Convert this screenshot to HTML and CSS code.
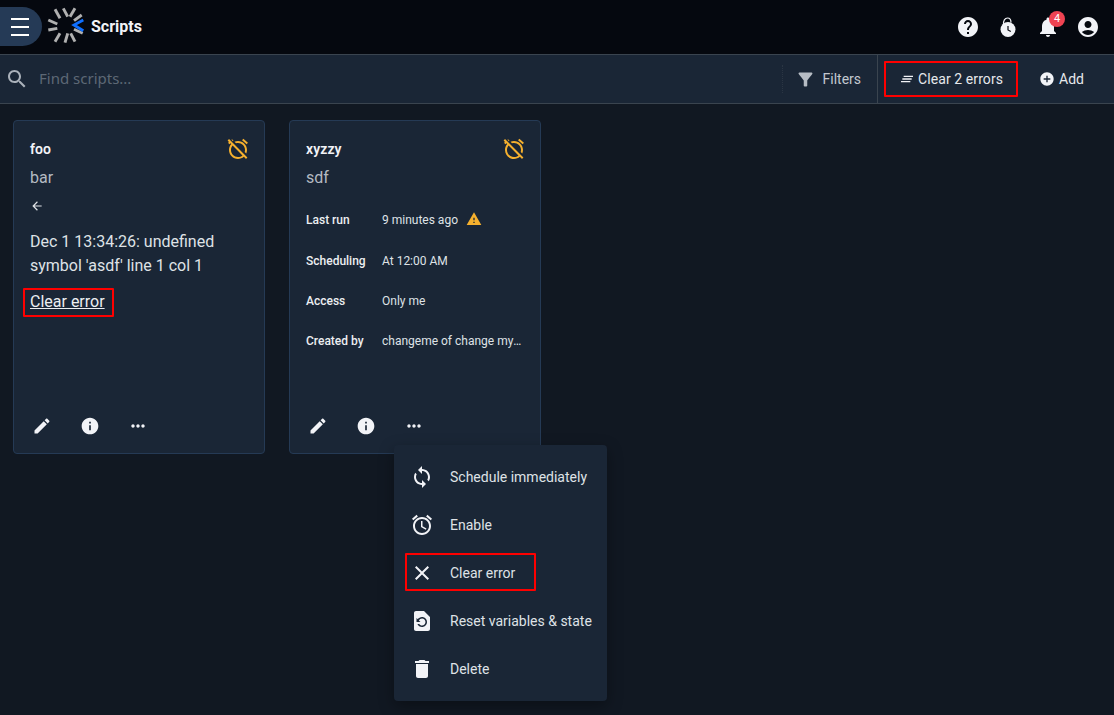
FILE: index.html
```html
<!DOCTYPE html>
<html lang="en">
<head>
<meta charset="utf-8">
<title>Scripts</title>
<link rel="stylesheet" href="styles.css">
</head>
<body>
<header class="topbar">
  <button class="nav-toggle" aria-label="Menu"><span></span><span></span><span></span></button>
  <svg class="logo" viewBox="0 0 44 42" width="44" height="42">
    <g stroke="#b0b0b0" stroke-width="2.900" fill="none">
      <path d="M11 5.300 16 14.300"/><path d="M19.300 4.300 23.700 12.700"/><path d="M31 4.300 26 12.700"/><path d="M37.700 11 30 16.700"/>
      <path d="M4.300 16 13.300 20"/><path d="M4.300 26 13.300 24.300"/><path d="M11 37.700 16 29.300"/>
      <path d="M21 38.700 23.700 29.300"/><path d="M31 37.700 26.700 29.300"/><path d="M38.700 29.300 30 25.300"/>
    </g>
    <path d="M39.300 16 30 21 39.300 26.700" stroke="#0f6fff" stroke-width="2.800" fill="none"/>
  </svg>
  <h1 class="page-title">Scripts</h1>
  <div class="top-actions">
    <svg class="icon" viewBox="0 0 24 24"><path d="M12 2C6.48 2 2 6.48 2 12s4.48 10 10 10 10-4.48 10-10S17.52 2 12 2zm1 17h-2v-2h2v2zm2.070-7.750l-.9.920C13.450 12.900 13 13.500 13 15h-2v-.5c0-1.100.450-2.100 1.170-2.830l1.240-1.260c.370-.360.590-.860.590-1.410 0-1.100-.9-2-2-2s-2 .9-2 2H8c0-2.210 1.790-4 4-4s4 1.790 4 4c0 .880-.360 1.680-.930 2.250z"/></svg>
    <svg class="icon" viewBox="0 0 24 24"><path d="M7.500 10C7 5.500 9 3 11.500 3S15 5 15 7.500" fill="none" stroke="#f2f3f7" stroke-width="1.200"/><circle cx="12" cy="14.500" r="7.500"/><path d="M12 11v4l2.800 1.500" fill="none" stroke="#05080f" stroke-width="1.200"/></svg>
    <div class="bell">
      <svg class="icon" viewBox="0 0 24 24"><path d="M12 22c1.100 0 2-.9 2-2h-4c0 1.100.890 2 2 2zm6-6v-5c0-3.070-1.640-5.640-4.500-6.320V4c0-.830-.670-1.500-1.500-1.500s-1.500.670-1.500 1.500v.680C7.630 5.360 6 7.920 6 11v5l-2 2v1h16v-1l-2-2z"/></svg>
      <span class="badge">4</span>
    </div>
    <svg class="icon" viewBox="0 0 24 24"><path d="M12 2C6.480 2 2 6.480 2 12s4.480 10 10 10 10-4.480 10-10S17.520 2 12 2zm0 4c1.930 0 3.500 1.570 3.500 3.500S13.930 13 12 13s-3.500-1.570-3.500-3.500S10.070 6 12 6zm0 14c-2.030 0-4.430-.820-6.140-2.880C7.550 15.800 9.680 15 12 15s4.450.800 6.140 2.120C16.430 19.180 14.030 20 12 20z"/></svg>
  </div>
</header>

<div class="toolbar">
  <svg class="icon search-icon" viewBox="0 0 24 24"><path d="M15.500 14h-.790l-.280-.270C15.410 12.590 16 11.110 16 9.500 16 5.910 13.090 3 9.500 3S3 5.910 3 9.500 5.910 16 9.500 16c1.610 0 3.090-.590 4.230-1.570l.270.280v.790l5 4.990L20.490 19l-4.990-5zm-6 0C7.010 14 5 11.990 5 9.500S7.010 5 9.500 5 14 7.010 14 9.500 11.990 14 9.500 14z"/></svg>
  <span class="search-text">Find scripts...</span>
  <div class="filters">
    <svg class="filter-icon" viewBox="0 0 24 24"><path d="M4.250 5.610C6.270 8.200 10 13 10 13v6c0 .550.450 1 1 1h2c.550 0 1-.450 1-1v-6s3.720-4.800 5.740-7.390c.510-.660.040-1.610-.790-1.610H5.040c-.830 0-1.300.950-.790 1.610z"/></svg>
    <span>Filters</span>
  </div>
  <div class="tool-actions">
    <div class="clear-all outlined">
      <svg class="icon-sm" viewBox="0 0 24 24"><path d="M5 13h14v-2H5v2zm-2 4h14v-2H3v2zM7 7v2h14V7H7z"/></svg>
      <span>Clear 2 errors</span>
    </div>
    <div class="add">
      <svg class="icon-add" viewBox="0 0 24 24"><path d="M12 2C6.480 2 2 6.480 2 12s4.480 10 10 10 10-4.480 10-10S17.520 2 12 2zm5 11h-4v4h-2v-4H7v-2h4V7h2v4h4v2z"/></svg>
      <span>Add</span>
    </div>
  </div>
</div>

<main class="cards">
  <article class="card">
    <div class="card-head">
      <div class="card-title">foo</div>
      <svg class="alarm-off" viewBox="0 0 24 24"><path d="M10.040 6.290C10.660 6.110 11.320 6 12 6c3.860 0 7 3.140 7 7 0 .680-.110 1.340-.290 1.960l1.560 1.560c.470-1.080.730-2.270.730-3.520 0-4.970-4.030-9-9-9-1.250 0-2.440.260-3.530.720l1.570 1.570zm7.297-4.480l4.607 3.845-1.280 1.535-4.610-3.843zM3.020 2.100L1.610 3.510l1.370 1.370-.920.770 1.280 1.540 1.060-.880.800.800C3.830 8.690 3 10.750 3 13c0 4.970 4.030 9 9 9 2.250 0 4.310-.830 5.890-2.200l2.100 2.100 1.410-1.410L3.020 2.100zM12 20c-3.860 0-7-3.140-7-7 0-1.700.610-3.260 1.620-4.470l9.850 9.850C15.260 19.390 13.700 20 12 20zM7.480 3.730L6.060 2.310l-.590.480 1.420 1.420z"/></svg>
    </div>
    <div class="card-sub">bar</div>
    <svg class="back" viewBox="0 0 24 24"><path d="M20 11H7.830l5.590-5.590L12 4l-8 8 8 8 1.410-1.410L7.830 13H20v-2z"/></svg>
    <p class="err-text">Dec 1 13:34:26: undefined symbol 'asdf' line 1 col 1</p>
    <a class="clear-link outlined">Clear error</a>
    <div class="card-actions">
      <svg class="icon" viewBox="0 0 24 24"><path d="M3 17.250V21h3.750L17.810 9.940l-3.750-3.750L3 17.250zM20.710 7.040c.390-.390.390-1.020 0-1.410l-2.340-2.340c-.390-.390-1.020-.390-1.410 0l-1.830 1.830 3.750 3.750 1.830-1.830z"/></svg>
      <svg class="icon" viewBox="0 0 24 24"><path d="M12 2C6.480 2 2 6.480 2 12s4.480 10 10 10 10-4.480 10-10S17.520 2 12 2zm1 15h-2v-6h2v6zm0-8h-2V7h2v2z"/></svg>
      <svg class="icon" viewBox="0 0 24 24"><path d="M6 10c-1.100 0-2 .9-2 2s.9 2 2 2 2-.9 2-2-.9-2-2-2zm12 0c-1.100 0-2 .9-2 2s.9 2 2 2 2-.9 2-2-.9-2-2-2zm-6 0c-1.100 0-2 .9-2 2s.9 2 2 2 2-.9 2-2-.9-2-2-2z"/></svg>
    </div>
  </article>

  <article class="card">
    <div class="card-head">
      <div class="card-title">xyzzy</div>
      <svg class="alarm-off" viewBox="0 0 24 24"><path d="M10.040 6.290C10.660 6.110 11.320 6 12 6c3.860 0 7 3.140 7 7 0 .680-.110 1.340-.290 1.960l1.560 1.560c.470-1.080.730-2.270.730-3.520 0-4.970-4.030-9-9-9-1.250 0-2.440.260-3.530.720l1.570 1.570zm7.297-4.480l4.607 3.845-1.280 1.535-4.610-3.843zM3.020 2.100L1.610 3.510l1.370 1.370-.920.770 1.280 1.540 1.060-.880.800.800C3.830 8.690 3 10.750 3 13c0 4.970 4.030 9 9 9 2.250 0 4.310-.830 5.890-2.200l2.100 2.100 1.410-1.410L3.020 2.100zM12 20c-3.860 0-7-3.140-7-7 0-1.700.610-3.260 1.620-4.470l9.850 9.850C15.260 19.390 13.700 20 12 20zM7.480 3.730L6.060 2.310l-.590.480 1.420 1.420z"/></svg>
    </div>
    <div class="card-sub">sdf</div>
    <dl class="details">
      <dt>Last run</dt>
      <dd>9 minutes ago <svg class="warn" viewBox="0 0 24 24"><path d="M1 21h22L12 2 1 21zm12-3h-2v-2h2v2zm0-4h-2v-4h2v4z"/></svg></dd>
      <dt>Scheduling</dt>
      <dd>At 12:00 AM</dd>
      <dt>Access</dt>
      <dd>Only me</dd>
      <dt>Created by</dt>
      <dd class="ellipsis">changeme of change my organization</dd>
    </dl>
    <div class="card-actions">
      <svg class="icon" viewBox="0 0 24 24"><path d="M3 17.250V21h3.750L17.810 9.940l-3.750-3.750L3 17.250zM20.710 7.040c.390-.390.390-1.020 0-1.410l-2.340-2.340c-.390-.390-1.020-.390-1.410 0l-1.830 1.830 3.750 3.750 1.830-1.830z"/></svg>
      <svg class="icon" viewBox="0 0 24 24"><path d="M12 2C6.480 2 2 6.480 2 12s4.480 10 10 10 10-4.480 10-10S17.520 2 12 2zm1 15h-2v-6h2v6zm0-8h-2V7h2v2z"/></svg>
      <svg class="icon" viewBox="0 0 24 24"><path d="M6 10c-1.100 0-2 .9-2 2s.9 2 2 2 2-.9 2-2-.9-2-2-2zm12 0c-1.100 0-2 .9-2 2s.9 2 2 2 2-.9 2-2-.9-2-2-2zm-6 0c-1.100 0-2 .9-2 2s.9 2 2 2 2-.9 2-2-.9-2-2-2z"/></svg>
    </div>
  </article>
</main>

<ul class="menu">
  <li><svg class="icon" viewBox="0 0 24 24"><path d="M12 4V1L8 5l4 4V6c3.310 0 6 2.690 6 6 0 1.010-.250 1.970-.7 2.800l1.460 1.460C19.540 15.030 20 13.570 20 12c0-4.420-3.580-8-8-8zm0 14c-3.310 0-6-2.690-6-6 0-1.010.250-1.970.7-2.800L5.240 7.740C4.460 8.970 4 10.430 4 12c0 4.420 3.580 8 8 8v3l4-4-4-4v3z"/></svg>Schedule immediately</li>
  <li><svg class="icon" viewBox="0 0 24 24"><path d="M22 5.720l-4.600-3.860-1.290 1.530 4.600 3.860L22 5.720zM7.880 3.390L6.600 1.860 2 5.710l1.290 1.530 4.590-3.850zM12.500 8H11v6l4.750 2.850.750-1.230-4-2.370V8zM12 4c-4.970 0-9 4.030-9 9s4.020 9 9 9c4.970 0 9-4.030 9-9s-4.030-9-9-9zm0 16c-3.870 0-7-3.130-7-7s3.130-7 7-7 7 3.130 7 7-3.130 7-7 7z"/></svg>Enable</li>
  <li class="marked"><svg class="icon" viewBox="0 0 24 24"><path d="M19 6.410L17.590 5 12 10.590 6.410 5 5 6.410 10.590 12 5 17.590 6.410 19 12 13.410 17.590 19 19 17.590 13.410 12z"/></svg>Clear error</li>
  <li><svg class="icon" viewBox="0 0 24 24"><path d="M14 2H6c-1.100 0-1.990.9-1.990 2L4 20c0 1.100.890 2 1.990 2H18c1.100 0 2-.9 2-2V8l-6-6zm-2 16c-2.050 0-3.810-1.240-4.580-3h1.710c.630.9 1.680 1.500 2.870 1.500 1.930 0 3.500-1.570 3.500-3.500S13.930 9.500 12 9.500c-1.350 0-2.520.780-3.100 1.900l1.600 1.600h-4V9l1.300 1.300C8.690 8.920 10.230 8 12 8c2.760 0 5 2.240 5 5s-2.240 5-5 5z"/></svg>Reset variables &amp; state</li>
  <li><svg class="icon" viewBox="0 0 24 24"><path d="M6 19c0 1.100.9 2 2 2h8c1.100 0 2-.9 2-2V7H6v12zM19 4h-3.500l-1-1h-5l-1 1H5v2h14V4z"/></svg>Delete</li>
</ul>
</body>
</html>
```
FILE: styles.css
```css
* { box-sizing: border-box; }
html, body { height: 100%; }
body {
  margin: 0;
  background: #111822;
  color: #f2f3f7;
  font-family: Roboto, "Liberation Sans", sans-serif;
  font-size: 14px;
  overflow: hidden;
  position: relative;
}
.icon { width: 24px; height: 24px; fill: #f2f3f7; flex: none; display: block; }

.topbar {
  height: 55px;
  background: #05080f;
  border-bottom: 1px solid #3a444f;
  display: flex;
  align-items: center;
  padding-bottom: 4px;
}
.nav-toggle {
  width: 42px;
  height: 39px;
  margin-top: 3px;
  border: 0;
  padding: 0 13px 0 11px;
  border-radius: 0 20px 20px 0;
  background: #253a56;
  display: flex;
  flex-direction: column;
  justify-content: center;
  gap: 6px;
}
.nav-toggle span { display: block; height: 2px; background: #fff; }
.logo { margin-left: 2px; flex: none; }
.page-title { margin: 3px 0 0 3px; font-size: 16px; font-weight: 700; line-height: 24px; }
.top-actions {
  margin-left: auto;
  margin-top: 3px;
  display: flex;
  gap: 16px;
  padding-right: 14px;
}
.bell { position: relative; }
.badge {
  position: absolute;
  top: -4px;
  left: 13px;
  width: 16px;
  height: 16px;
  border-radius: 50%;
  background: #ef4352;
  color: #fff;
  font-size: 11px;
  line-height: 16px;
  text-align: center;
}

.toolbar {
  height: 49px;
  background: #1a2636;
  border-bottom: 1px solid #3a444f;
  display: flex;
  align-items: center;
  color: #c3c8cf;
}
.search-icon { fill: #aab1ba; margin-left: 5px; }
.search-text {
  margin: -2px 0 0 10px;
  color: #5d6875;
  font-family: "Noto Sans", sans-serif;
  font-size: 15px;
}
.filters {
  margin-left: auto;
  height: 28px;
  display: flex;
  align-items: center;
  border-left: 1px dotted #2a3543;
  padding-left: 12px;
  padding-right: 16px;
  gap: 7px;
}
.filter-icon { width: 21px; height: 21px; fill: #b6bcc4; flex: none; }
.tool-actions {
  align-self: stretch;
  border-left: 1px solid #3a444f;
  display: flex;
  align-items: center;
  padding-left: 6px;
  padding-right: 30px;
  gap: 21px;
  color: #e6e8ec;
}
.outlined { outline: 2px solid #f00; outline-offset: -2px; border-radius: 1px; }
.clear-all {
  width: 134px;
  height: 36px;
  display: flex;
  align-items: center;
  justify-content: center;
  gap: 3px;
  letter-spacing: .08px;
}
.icon-sm { width: 16px; height: 16px; fill: #f2f3f7; }
.add { display: flex; align-items: center; gap: 4px; }
.icon-add { width: 16px; height: 16px; fill: #f2f3f7; }

.cards {
  display: flex;
  gap: 24px;
  padding: 16px 13px;
  align-items: flex-start;
}
.card {
  width: 252px;
  height: 334px;
  background: #1a2636;
  border: 1px solid #253a55;
  border-radius: 4px;
  padding: 16px;
  display: flex;
  flex-direction: column;
  align-items: flex-start;
  position: relative;
}
.card-head {
  width: 100%;
  height: 24px;
  display: flex;
  justify-content: space-between;
  align-items: center;
}
.card-title { font-weight: 600; font-size: 14px; letter-spacing: .1px; }
.alarm-off { width: 24px; height: 24px; fill: #f5b02e; margin-right: -2px; }
.card-sub { font-size: 16px; line-height: 24px; margin-top: 5px; color: #b4bac2; }
.back { width: 14px; height: 14px; fill: #dfe2e6; margin-top: 9px; }
.err-text { margin: 17px 0 0; font-size: 16px; line-height: 24px; color: #dfe2e6; }
.clear-link {
  margin: 10px 0 0 -7px;
  padding: 2px 7px 0 7px;
  height: 29px;
  width: 91px;
  font-size: 16px;
  line-height: 24px;
  color: #eceef1;
  text-decoration: underline;
}
.details {
  margin: 10px 0 0;
  display: grid;
  grid-template-columns: 76px 140px;
  grid-template-rows: 40px 41px 40px 40px;
  align-items: center;
  font-size: 12px;
  color: #dfe2e6;
}
.details dt { font-weight: 500; color: #eceef1; }
.details dd { margin: 0; display: flex; align-items: center; gap: 0; white-space: pre; }
.details .ellipsis { display: block; overflow: hidden; text-overflow: ellipsis; white-space: nowrap; }
.warn { width: 16px; height: 16px; fill: #f5b02e; margin-left: 5px; margin-top: -3px; }
.card-actions {
  position: absolute;
  left: 16px;
  bottom: 15px;
  display: flex;
  gap: 24px;
}
.card-actions .icon { width: 24px; height: 24px; padding: 2px; }

.menu {
  position: absolute;
  left: 394px;
  top: 445px;
  width: 213px;
  margin: 0;
  padding: 8px 0;
  list-style: none;
  background: #1a2636;
  border-radius: 4px;
  box-shadow: 0 5px 15px rgba(0, 0, 0, .35);
  color: #dfe2e6;
}
.menu li {
  height: 48px;
  display: flex;
  align-items: center;
  padding-left: 16px;
  gap: 16px;
  position: relative;
}
.menu .marked::after {
  content: "";
  box-sizing: border-box;
  position: absolute;
  left: 11px;
  top: 4px;
  width: 131px;
  height: 38px;
  border: 2px solid #f00;
  border-radius: 1px;
}
```
